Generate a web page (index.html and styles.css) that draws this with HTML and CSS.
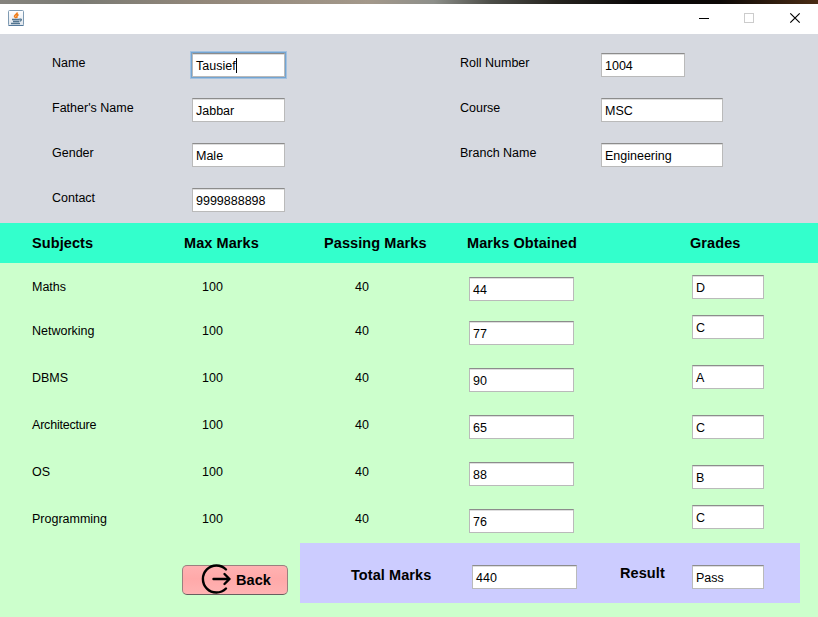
FILE: index.html
```html
<!DOCTYPE html>
<html lang="en">
<head>
<meta charset="utf-8">
<title>Result</title>
<link rel="stylesheet" href="styles.css">
</head>
<body>
<div class="backdrop"></div>
<header class="titlebar">
  <svg class="java" width="16" height="16" viewBox="0 0 16 16">
    <defs><linearGradient id="jg" x1="0" y1="0" x2="0" y2="1"><stop offset="0" stop-color="#fff"/><stop offset="1" stop-color="#dfe5ec"/></linearGradient></defs>
    <rect x=".5" y=".5" width="15" height="15" rx="1" fill="url(#jg)" stroke="#7f9bb3"/>
    <path d="M.5 15.500h15" stroke="#53789a"/>
    <path d="M9.500 2.500C9 4.500 6 5 6.500 6.500L8 8M10.500 4.500C8.500 5.500 8.500 6.500 9 8" fill="none" stroke="#f07c18" stroke-width="1.500"/>
    <path d="M4 9.500h7.500M5 11.500h6M3 13.500h9M11.500 9.200c2.400-.6 2.600 1.400 0 2.200" fill="none" stroke="#51748f" stroke-width="1.300"/>
  </svg>
  <svg class="controls" width="104" height="12" viewBox="0 0 104 12">
    <path d="M0 6.500h10" stroke="#000"/>
    <rect x="45.500" y="1.500" width="9" height="9" fill="none" stroke="#ccc"/>
    <path d="M91.300 1.300l9.400 9.400M100.700 1.300l-9.400 9.400" stroke="#000" stroke-width="1.200"/>
  </svg>
</header>
<section class="student">
  <div class="line"><span class="label">Name</span><div class="field w93 focused">Tausief<i class="caret"></i></div><span class="label second">Roll Number</span><div class="field w84">1004</div></div>
  <div class="line"><span class="label">Father's Name</span><div class="field w93">Jabbar</div><span class="label second">Course</span><div class="field w122">MSC</div></div>
  <div class="line"><span class="label">Gender</span><div class="field w93">Male</div><span class="label second">Branch Name</span><div class="field w122">Engineering</div></div>
  <div class="line"><span class="label">Contact</span><div class="field w93">9999888898</div></div>
</section>
<section class="marks">
  <div class="row head"><b>Subjects</b><b>Max Marks</b><b>Passing Marks</b><b>Marks Obtained</b><b>Grades</b></div>
  <div class="row short"><span>Maths</span><span class="max">100</span><span class="pass">40</span><div class="field got">44</div><div class="field grade g1">D</div></div>
  <div class="row"><span>Networking</span><span class="max">100</span><span class="pass">40</span><div class="field got">77</div><div class="field grade g2">C</div></div>
  <div class="row"><span>DBMS</span><span class="max">100</span><span class="pass">40</span><div class="field got">90</div><div class="field grade g3">A</div></div>
  <div class="row"><span class="tight">Architecture</span><span class="max">100</span><span class="pass">40</span><div class="field got">65</div><div class="field grade">C</div></div>
  <div class="row"><span>OS</span><span class="max">100</span><span class="pass">40</span><div class="field got">88</div><div class="field grade g5">B</div></div>
  <div class="row"><span>Programming</span><span class="max">100</span><span class="pass">40</span><div class="field got">76</div><div class="field grade g6">C</div></div>
</section>
<footer class="bottom">
  <button class="back">
    <svg width="30" height="30" viewBox="0 0 30 30" fill="none" stroke="#000" stroke-width="2.400" stroke-linecap="round" stroke-linejoin="round"><path d="M25 5.500A13.500 13.500 0 1 0 25 24.500M12.500 15h16M23.500 10l5 5-5 5"/></svg>
    <b>Back</b>
  </button>
  <div class="summary">
    <b class="total">Total Marks</b><div class="field got">440</div><b class="result">Result</b><div class="field grade">Pass</div>
  </div>
</footer>
</body>
</html>
```
FILE: styles.css
```css
* { box-sizing: border-box; }
body {
  margin: 0;
  width: 818px;
  height: 617px;
  overflow: hidden;
  background: #ccffcc;
  color: #000;
  font: 12.5px/16px "Liberation Sans", Arial, sans-serif;
}
b { font-size: 14.5px; letter-spacing: .08px; white-space: nowrap; }
.backdrop {
  height: 4px;
  background: linear-gradient(90deg, #85837d, #7b7b74 10%, #92877a 25%, #a3988a 45%, #8d8f8a 53%, #4c4d48 60%, #26241f 68%, #0a0808 78%, #0c0806 88%, #4a2c14);
}
.titlebar {
  height: 30px;
  padding: 0 15px 0 8px;
  display: flex;
  justify-content: space-between;
  background: #fff;
}
.java { margin-top: 6px; }
.controls { margin-top: 8px; }
.student { height: 189px; padding: 19px 0 0 52px; background: #d6d9e0; }
.line { display: flex; height: 45px; }
.label { width: 140px; margin-top: 2px; }
.label.second { width: 141px; margin-left: 175px; }
.field {
  height: 24px;
  padding: 4px 3px 0;
  flex: none;
  background: #fff;
  border: 1px solid #bababa;
  border-top-color: #8c8c8c;
  box-shadow: inset 0 1px #dedede;
}
.w93 { width: 93px; }
.w84 { width: 84px; }
.w122 { width: 122px; }
.focused { box-shadow: inset 0 1px #dedede, 0 0 0 1px #73a4d1, 0 0 0 2px #a3c2e1; }
.caret { display: inline-block; width: 1px; height: 15px; background: #000; vertical-align: top; }
.row {
  display: grid;
  grid-template-columns: 152px 140px 145px 223px 80px;
  align-items: start;
  height: 47px;
  padding-left: 32px;
}
.row.short { height: 44px; }
.row > span { margin-top: 16px; }
.row.head { grid-template-columns: 152px 140px 143px 223px 80px; height: 40px; padding-top: 12px; background: #33ffcc; }
.tight { letter-spacing: -.2px; }
.max { padding-left: 18px; }
.pass { padding-left: 31px; }
.got { width: 105px; }
.grade { width: 72px; }
.row .field { margin-top: 14px; }
.row .g1 { margin-top: 12px; }
.row .g2 { margin-top: 8px; }
.row .g3 { margin-top: 11px; }
.row .g5 { margin-top: 17px; }
.row .g6 { margin-top: 10px; }
.bottom { display: flex; padding: 1px 0 0 182px; }
.back {
  display: flex;
  align-items: center;
  gap: 5px;
  width: 106px;
  height: 30px;
  margin: 22px 12px 0 0;
  padding: 0 0 2px 18px;
  font: inherit;
  color: #000;
  border: 1px solid #9b7f7f;
  border-bottom-color: #685f5f;
  border-radius: 5px;
  background: linear-gradient(#ffb2b2, #ffa9a9 45%, #ffb3b3);
}
.back svg { flex: none; overflow: visible; }
.back b { margin-top: 2px; }
.summary { display: flex; width: 500px; height: 60px; background: #ccccff; }
.summary .field { margin-top: 22px; }
.total { width: 121px; margin: 24px 0 0 51px; }
.result { width: 72px; margin: 22px 0 0 43px; }
```
